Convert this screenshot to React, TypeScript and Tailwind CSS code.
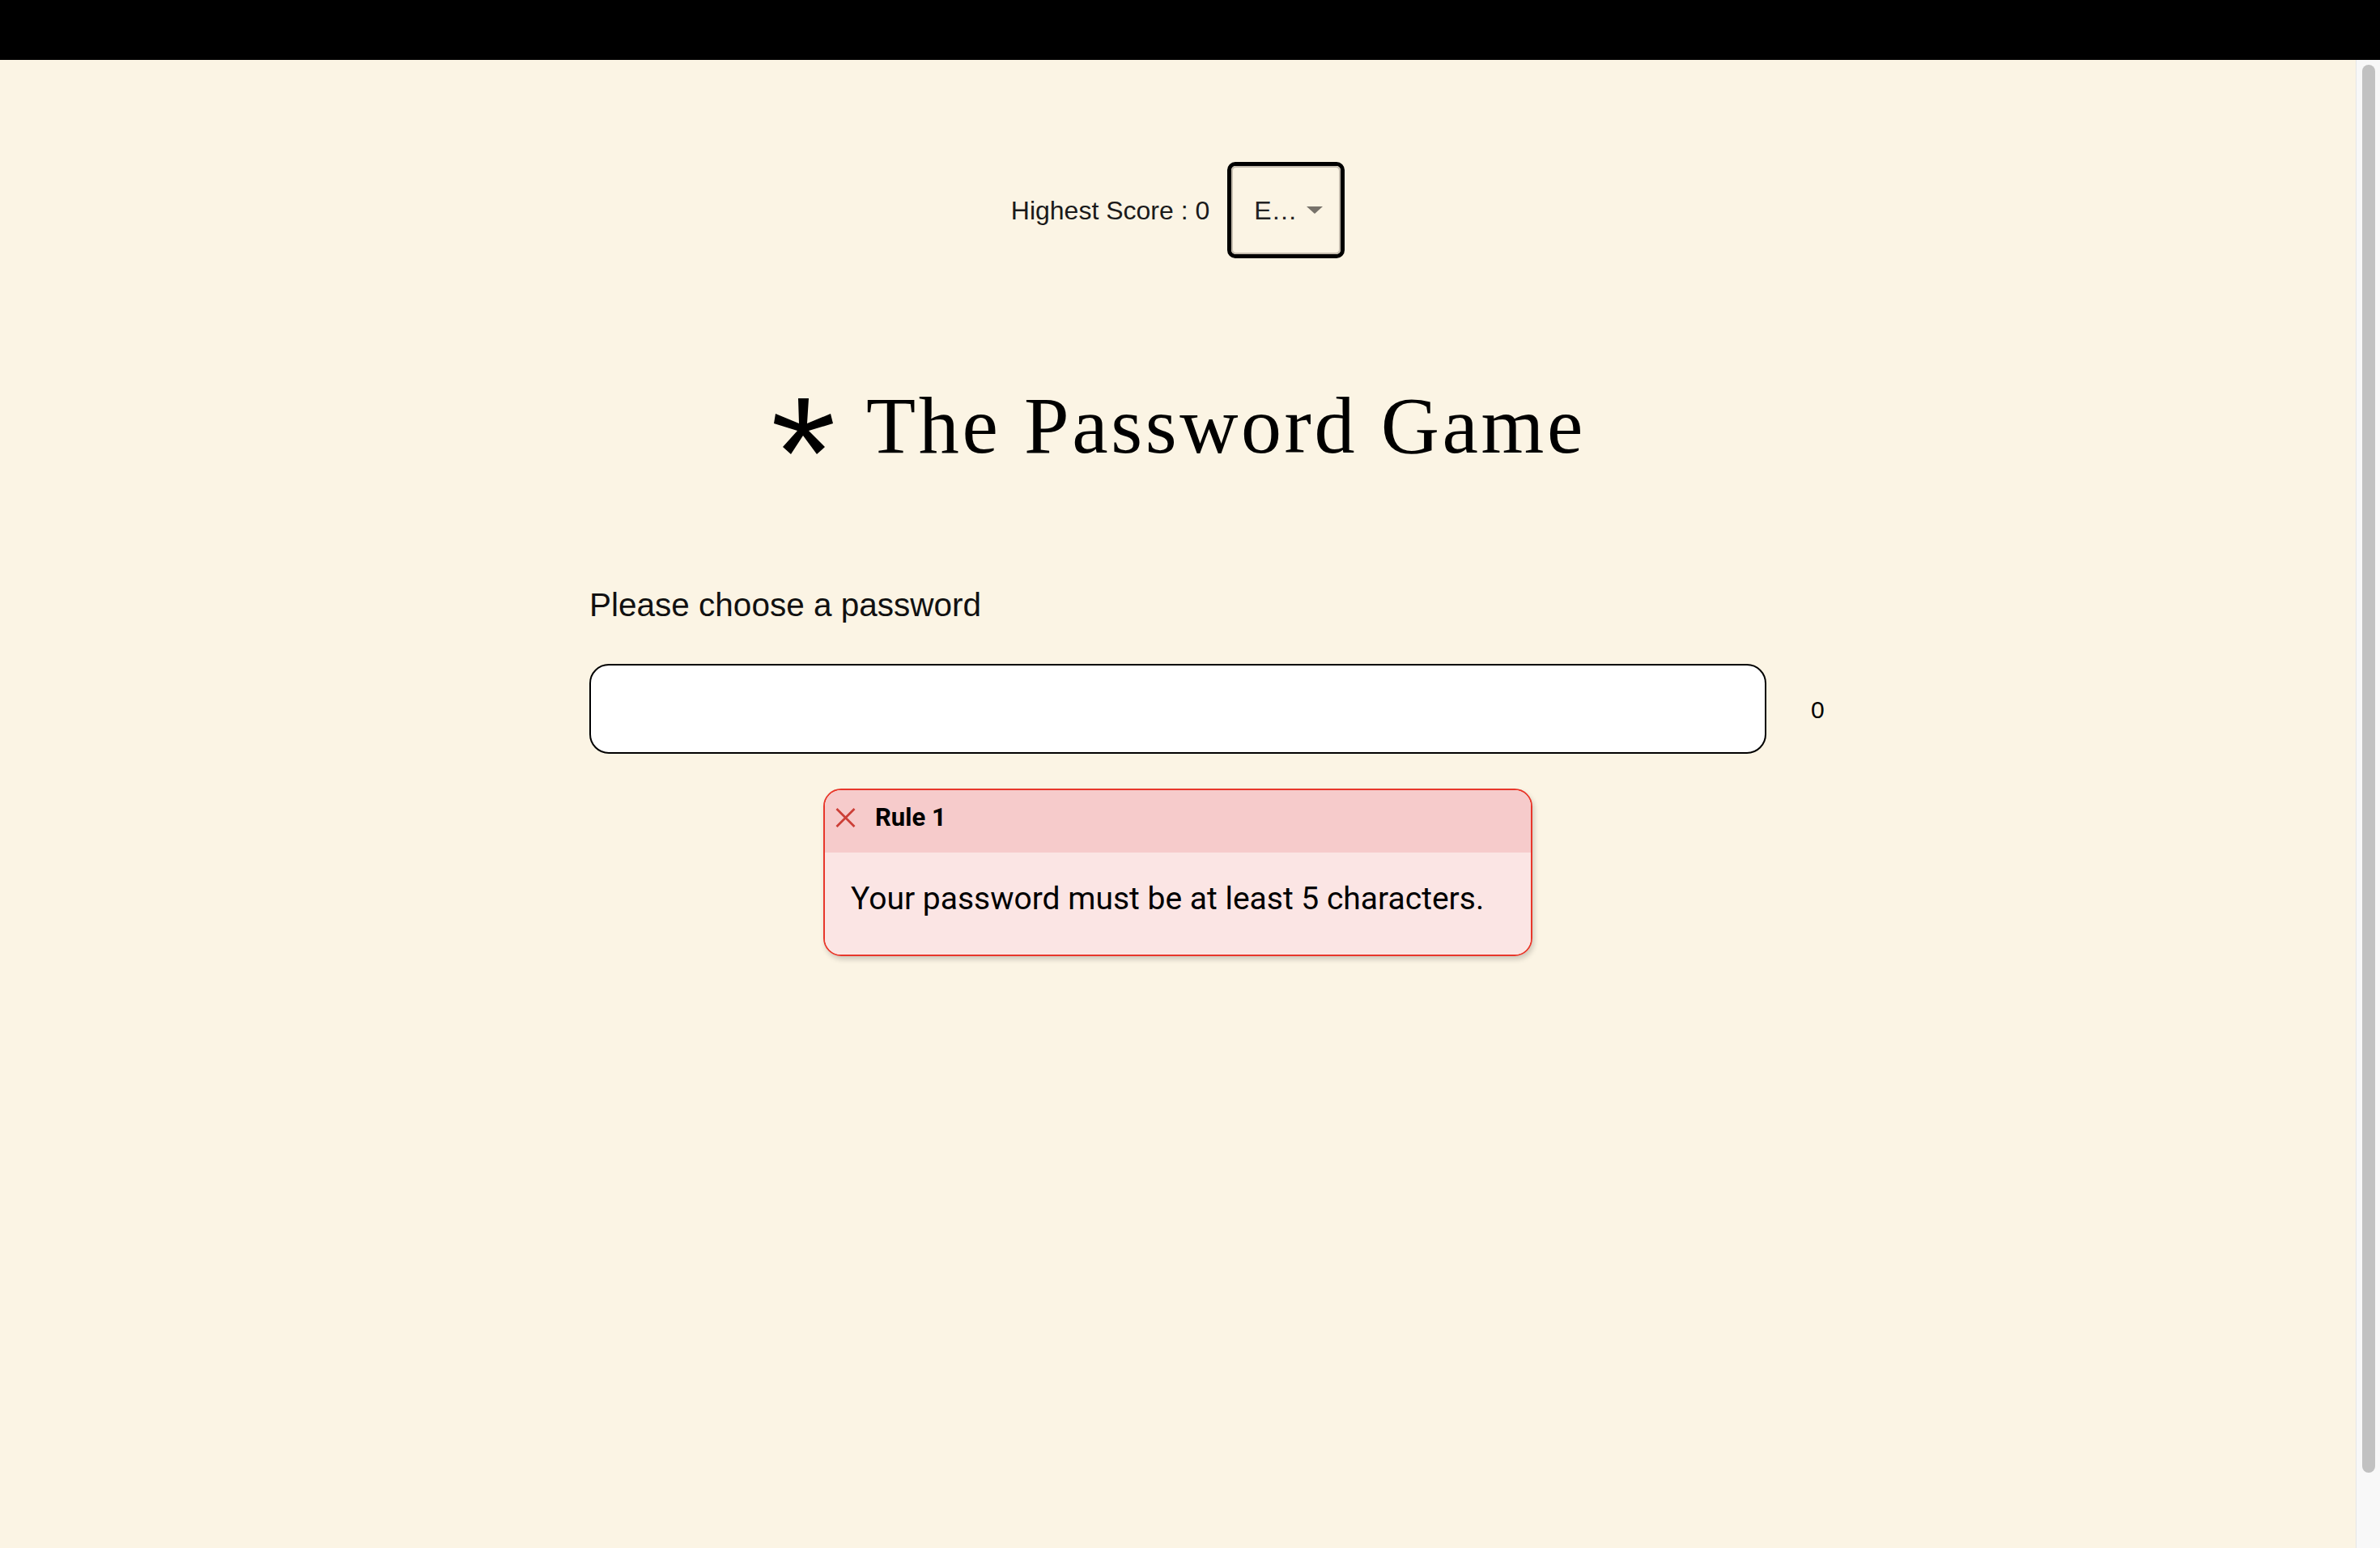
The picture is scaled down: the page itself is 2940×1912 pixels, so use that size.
import React from "react";

const sans = { fontFamily: '"Liberation Sans", Arial, sans-serif' };
const serif = { fontFamily: '"Liberation Serif", "Times New Roman", serif' };
const ui = { fontFamily: 'Roboto, "Noto Sans", sans-serif' };

const Asterisk = () => (
  <svg width="83" height="77" viewBox="0 0 83 77" className="shrink-0">
    <polygon
      fill="#000"
      points="48,4 46,35 75,23 78,35 48,44 68,64 58,73 41,50 26,73 16,64 34,44 5,35 7,23 36,35 35,4"
    />
  </svg>
);

const DifficultySelect = () => (
  <div className="w-[145px] h-[119px] border-[5px] border-black rounded-[10px] p-0">
    <div className="w-full h-full border-2 border-[#c4bcae] rounded-[6px] flex items-center pl-[26px] gap-[11px]">
      <span className="text-[32px] text-[#222]" style={sans}>
        E…
      </span>
      <svg width="20" height="9" viewBox="0 0 20 9">
        <polygon points="0,0 20,0 10,9" fill="#77726a" />
      </svg>
    </div>
  </div>
);

const RuleCard = ({ num, text }: { num: number; text: string }) => (
  <div className="w-[876px] self-center border-2 border-[#e8372b] rounded-[22px] overflow-hidden shadow-[2px_4px_6px_rgba(0,0,0,0.18)]">
    <div className="bg-[#f6cbcb] flex items-center pl-[13px] pt-[16px] pb-[25px] gap-[24px]">
      <svg width="25" height="24" viewBox="0 0 25 24">
        <path
          d="M1.5 1 L23.5 23 M23.5 1 L1.5 23"
          stroke="#cc3f37"
          strokeWidth={2.8}
          fill="none"
        />
      </svg>
      <span className="text-[31px] leading-[36px] font-bold text-black" style={ui}>
        Rule {num}
      </span>
    </div>
    <div
      className="bg-[#fbe5e4] px-[32px] pt-[33px] pb-[45px] text-[39px] leading-[48px] text-black"
      style={ui}
    >
      {text}
    </div>
  </div>
);

export default function App() {
  return (
    <div className="h-[1912px] overflow-hidden flex flex-col bg-[#fbf4e4]">
      <div className="h-[74px] bg-black shrink-0" />
      <div className="flex flex-1 min-h-0">
        <main className="flex-1 flex flex-col items-center">
          <div className="mt-[126px] flex items-center gap-[22px]">
            <span className="text-[32px] text-[#1a1a1a]" style={sans}>
              Highest Score : 0
            </span>
            <DifficultySelect />
          </div>

          <h1 className="mt-[159px] flex items-center gap-[36px]">
            <Asterisk />
            <span
              className="text-[100px] leading-[96px] font-normal tracking-[3.6px] text-black"
              style={serif}
            >
              The Password Game
            </span>
          </h1>

          <div className="mt-[149px] w-[1454px] flex flex-col">
            <label className="text-[40.5px] leading-[48px] text-[#111]" style={sans}>
              Please choose a password
            </label>
            <div className="relative mt-[49px] h-[111px] border-2 border-black rounded-[24px] bg-white">
              <span
                className="absolute left-[calc(100%+57px)] top-1/2 -translate-y-1/2 text-[30px] text-black"
                style={sans}
              >
                0
              </span>
            </div>
            <div className="mt-[43px] flex flex-col">
              <RuleCard num={1} text="Your password must be at least 5 characters." />
            </div>
          </div>
        </main>

        <div className="w-[30px] shrink-0 bg-[#f8f8f8] border-l border-[#e6e6e6] pt-[6px] pb-[93px] pl-[7px] pr-[6px]">
          <div className="h-full w-[16px] rounded-full bg-[#c1c1c1]" />
        </div>
      </div>
    </div>
  );
}
